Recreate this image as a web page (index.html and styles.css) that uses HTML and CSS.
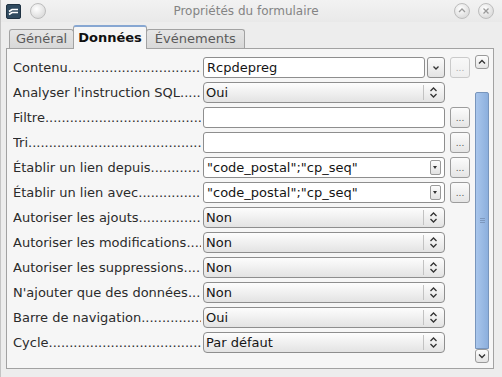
FILE: index.html
```html
<!DOCTYPE html>
<html lang="fr">
<head>
    <meta charset="UTF-8">
    <title>Propriétés du formulaire</title>
    <link rel="stylesheet" href="styles.css">
</head>
<body>
    <div class="window">
        <div class="titlebar">
            <svg class="app-icon" width="15" height="15" viewBox="0 0 15 15">
                <rect x="0.5" y="0.5" width="14" height="14" rx="1.5" fill="#2f4a5f" stroke="#1f3242"/>
                <path d="M3 7.5 L6 5.5 L12 5.5" fill="none" stroke="#fff" stroke-width="1.6"/>
                <path d="M3 10.5 L6 8.5 L12 8.5" fill="none" stroke="#fff" stroke-width="1.6"/>
            </svg>
            <span class="circle-btn"></span>
            <div class="title">Propriétés du formulaire</div>
            <span class="circle-btn">
                <svg width="14" height="14" viewBox="0 0 14 14"><path d="M4 8 L7 5 L10 8" fill="none" stroke="#9a9a9a" stroke-width="1.3"/></svg>
            </span>
            <span class="circle-btn">
                <svg width="14" height="14" viewBox="0 0 14 14"><path d="M4.5 4.5 L9.5 9.5 M9.5 4.5 L4.5 9.5" fill="none" stroke="#9a9a9a" stroke-width="1.3"/></svg>
            </span>
        </div>

        <div class="tabs">
            <div class="tab">Général</div>
            <div class="tab active">Données</div>
            <div class="tab">Événements</div>
        </div>

        <div class="pane">
            <div class="props">
                <div class="row">
                    <div class="prop">Contenu</div>
                    <div class="combo">
                        <div class="field">Rcpdepreg</div>
                        <div class="drop-btn">
                            <svg width="10" height="10" viewBox="0 0 10 10"><path d="M2.5 3.5 L5 6 L7.5 3.5" fill="none" stroke="#333" stroke-width="1.3"/></svg>
                        </div>
                    </div>
                    <div class="more disabled">...</div>
                </div>
                <div class="row">
                    <div class="prop">Analyser l'instruction SQL</div>
                    <div class="select"><span class="val">Oui</span><span class="sep"></span><span class="spin"></span></div>
                </div>
                <div class="row">
                    <div class="prop">Filtre</div>
                    <div class="field wide"></div>
                    <div class="more">...</div>
                </div>
                <div class="row">
                    <div class="prop">Tri</div>
                    <div class="field wide"></div>
                    <div class="more">...</div>
                </div>
                <div class="row">
                    <div class="prop">Établir un lien depuis</div>
                    <div class="field wide with-mini">"code_postal";"cp_seq"<span class="mini"></span></div>
                    <div class="more">...</div>
                </div>
                <div class="row">
                    <div class="prop">Établir un lien avec</div>
                    <div class="field wide with-mini">"code_postal";"cp_seq"<span class="mini"></span></div>
                    <div class="more">...</div>
                </div>
                <div class="row">
                    <div class="prop">Autoriser les ajouts</div>
                    <div class="select"><span class="val">Non</span><span class="sep"></span><span class="spin"></span></div>
                </div>
                <div class="row">
                    <div class="prop">Autoriser les modifications</div>
                    <div class="select"><span class="val">Non</span><span class="sep"></span><span class="spin"></span></div>
                </div>
                <div class="row">
                    <div class="prop">Autoriser les suppressions</div>
                    <div class="select"><span class="val">Non</span><span class="sep"></span><span class="spin"></span></div>
                </div>
                <div class="row">
                    <div class="prop">N'ajouter que des données</div>
                    <div class="select"><span class="val">Non</span><span class="sep"></span><span class="spin"></span></div>
                </div>
                <div class="row">
                    <div class="prop">Barre de navigation</div>
                    <div class="select"><span class="val">Oui</span><span class="sep"></span><span class="spin"></span></div>
                </div>
                <div class="row">
                    <div class="prop">Cycle</div>
                    <div class="select"><span class="val">Par défaut</span><span class="sep"></span><span class="spin"></span></div>
                </div>
            </div>

            <div class="scrollbar">
                <div class="scroll-btn">
                    <svg width="12" height="12" viewBox="0 0 12 12"><path d="M3 7.5 L6 4.5 L9 7.5" fill="none" stroke="#333" stroke-width="1.3"/></svg>
                </div>
                <div class="track">
                    <div class="thumb"><span class="grip"></span></div>
                </div>
                <div class="scroll-btn">
                    <svg width="12" height="12" viewBox="0 0 12 12"><path d="M3 4.5 L6 7.5 L9 4.5" fill="none" stroke="#333" stroke-width="1.3"/></svg>
                </div>
            </div>
        </div>
    </div>
</body>
</html>
```

FILE: styles.css
```css
body {
    margin: 0;
    font-family: "DejaVu Sans", sans-serif;
    font-size: 13px;
    color: #2b2b2b;
    background: #ededed;
}

.window {
    width: 502px;
    height: 377px;
    box-sizing: border-box;
    border-left: 1px solid #c4c4c4;
    background: #ededed;
    overflow: hidden;
}

.titlebar {
    display: flex;
    align-items: center;
    height: 22px;
    padding: 0 8px 0 5px;
    background: linear-gradient(#f2f2f2, #e9e9e9);
}

.app-icon {
    display: block;
}

.circle-btn {
    width: 14px;
    height: 14px;
    margin-left: 9px;
    border: 1px solid #bdbdbd;
    border-radius: 50%;
    background: radial-gradient(circle at 40% 35%, #ffffff, #dedede 70%);
    display: flex;
    align-items: center;
    justify-content: center;
}

.circle-btn svg {
    display: block;
}

.title {
    flex: 1;
    text-align: center;
    font-size: 12px;
    color: #848484;
    padding-right: 8px;
}

.titlebar .circle-btn + .circle-btn {
    margin-left: 8px;
}

.title + .circle-btn {
    margin-left: 0;
}

.tabs {
    display: flex;
    align-items: flex-end;
    height: 22px;
    margin-top: 4px;
    padding-left: 8px;
    position: relative;
    z-index: 1;
}

.tab {
    height: 18px;
    line-height: 18px;
    padding: 0 6px;
    border: 1px solid #a2a2a2;
    border-bottom: none;
    border-radius: 3px 3px 0 0;
    background: linear-gradient(#e6e6e6, #d8d8d8);
    color: #5a5a5a;
}

.tab + .tab {
    margin-left: -1px;
}

.tab.active {
    height: 22px;
    line-height: 22px;
    padding: 0 4px;
    margin-bottom: -1px;
    border-top: 2px solid #87a7d2;
    background: #f6f6f6;
    font-weight: bold;
    color: #111;
}

.tab:last-child {
    padding: 0 8px;
}

.pane {
    display: flex;
    width: 488px;
    height: 321px;
    box-sizing: border-box;
    margin-left: 5px;
    border: 1px solid #a2a2a2;
    background: #f6f6f6;
}

.props {
    padding: 8px 0 0 6px;
}

.row {
    display: flex;
    align-items: center;
    height: 21px;
    margin-bottom: 4px;
}

.prop {
    width: 188px;
    margin-right: 2px;
    overflow: hidden;
    white-space: nowrap;
    line-height: 21px;
}

.prop::after {
    content: "................................................................";
}

.field,
.select {
    height: 21px;
    box-sizing: border-box;
    display: flex;
    align-items: center;
    white-space: nowrap;
    color: #151515;
}

.field {
    padding-left: 3px;
    border: 1px solid #8e8e8e;
    border-radius: 3px;
    background: #fff;
}

.field.wide {
    width: 242px;
}

.combo {
    display: flex;
    width: 242px;
}

.combo .field {
    width: 222px;
}

.drop-btn {
    width: 18px;
    height: 21px;
    box-sizing: border-box;
    margin-left: 2px;
    border: 1px solid #8e8e8e;
    border-radius: 3px;
    background: linear-gradient(#fbfbfb, #e3e3e3);
    display: flex;
    align-items: center;
    justify-content: center;
}

.with-mini {
    position: relative;
}

.mini {
    position: absolute;
    right: 3px;
    top: 2px;
    width: 11px;
    height: 15px;
    box-sizing: border-box;
    border: 1px solid #9a9a9a;
    border-radius: 2px;
    background: linear-gradient(#fcfcfc, #e2e2e2);
}

.mini::after {
    content: "";
    position: absolute;
    left: 2px;
    top: 5px;
    border-left: 2.5px solid transparent;
    border-right: 2.5px solid transparent;
    border-top: 3px solid #333;
}

.select {
    width: 242px;
    padding-left: 2px;
    border: 1px solid #8e8e8e;
    border-radius: 4px;
    background: linear-gradient(#fdfdfd, #e3e3e3);
}

.select .val {
    flex: 1;
}

.select .sep {
    width: 1px;
    height: 15px;
    background: #c2c2c2;
}

.spin {
    width: 20px;
    height: 19px;
    background: url("data:image/svg+xml,%3Csvg xmlns='http://www.w3.org/2000/svg' width='20' height='19'%3E%3Cpath d='M6.5 8 L9.5 5 L12.5 8 M6.5 11 L9.5 14 L12.5 11' fill='none' stroke='%23333' stroke-width='1.3'/%3E%3C/svg%3E") no-repeat center;
}

.more {
    width: 20px;
    height: 21px;
    box-sizing: border-box;
    margin-left: 5px;
    border: 1px solid #9c9c9c;
    border-radius: 3px;
    background: linear-gradient(#fbfbfb, #e5e5e5);
    color: #555;
    font-size: 9px;
    line-height: 21px;
    text-align: center;
}

.more.disabled {
    border-color: #cacaca;
    color: #a8a8a8;
    background: linear-gradient(#f8f8f8, #eeeeee);
}

.scrollbar {
    display: flex;
    flex-direction: column;
    width: 14px;
    margin: 6px 0 5px 5px;
    height: 308px;
}

.scroll-btn {
    width: 14px;
    height: 14px;
    box-sizing: border-box;
    border: 1px solid #9a9a9a;
    border-radius: 3px;
    background: linear-gradient(#fdfdfd, #e4e4e4);
    display: flex;
    align-items: center;
    justify-content: center;
}

.track {
    flex: 1;
    display: flex;
    flex-direction: column;
    justify-content: flex-end;
}

.thumb {
    height: 257px;
    box-sizing: border-box;
    border: 1px solid #7895bc;
    border-radius: 2px 2px 0 0;
    background: linear-gradient(to right, #a9c6ec, #8cafdd);
    display: flex;
    align-items: center;
    justify-content: center;
}

.grip {
    width: 5px;
    height: 5px;
    border-top: 1px solid #7c97bd;
    border-bottom: 1px solid #7c97bd;
    box-sizing: border-box;
    position: relative;
}

.grip::after {
    content: "";
    position: absolute;
    left: 0;
    right: 0;
    top: 1px;
    border-top: 1px solid #7c97bd;
}
```
